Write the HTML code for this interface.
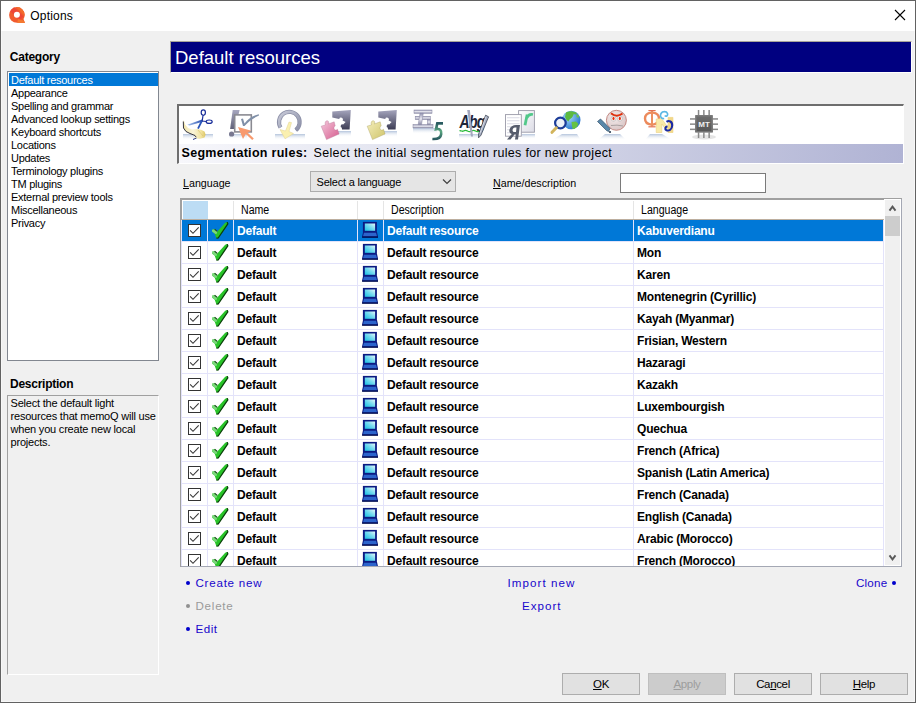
<!DOCTYPE html>
<html><head><meta charset="utf-8"><style>
*{margin:0;padding:0;box-sizing:border-box}
html,body{width:916px;height:703px;overflow:hidden;background:#f0f0f0;font-family:"Liberation Sans",sans-serif;color:#000}
.a{position:absolute}
.t{position:absolute;white-space:pre;line-height:1}
.cat{position:absolute;left:1px;height:13px;width:148px;font-size:11px;letter-spacing:-0.27px;line-height:14px;padding-left:2px;white-space:pre}
.sel{background:#0078d7;color:#fff}
.btn{position:absolute;top:673px;width:78px;height:22px;background:#e1e1e1;border:1px solid #adadad;font-size:11.5px;letter-spacing:-0.35px;text-align:center;line-height:20px;white-space:pre}
.lk{position:absolute;font-size:11.6px;letter-spacing:0.5px;color:#1806cc;white-space:pre;line-height:1}
.dot{position:absolute;width:4.6px;height:4.6px;border-radius:50%;background:#0000cc}
.row{position:absolute;left:0;width:702px;height:22px;border-bottom:1px solid #e3e3fa}
.vl{position:absolute;top:0;width:1px;height:100%;background:#e3e3fa}
.cb{position:absolute;left:7px;top:4px;width:13px;height:13px;border:1px solid #333;background:#fff}
.gt{position:absolute;top:0.5px;line-height:21px;font-size:12px;letter-spacing:-0.2px;font-weight:bold;white-space:pre}
</style></head><body>
<svg width="0" height="0" style="position:absolute"><defs><linearGradient id="scr" x1="0" y1="1" x2="1" y2="0"><stop offset="0" stop-color="#18c0e4"/><stop offset="0.55" stop-color="#7adcf0"/><stop offset="1" stop-color="#e4f8fa"/></linearGradient></defs></svg>
<div class="a" style="left:0;top:0;width:916px;height:703px;border:1px solid #626262"></div>
<div class="a" style="left:1px;top:1px;width:914px;height:701px;border:1px solid #f7f7f7;border-top:0"></div>
<div class="a" style="left:1px;top:1px;width:914px;height:30px;background:#fff"></div>
<svg class="a" style="left:6px;top:4px" width="22" height="22" viewBox="6 4 22 22">
<defs><clipPath id="qc"><circle cx="16.9" cy="14.9" r="7.8"/><path d="M16.9 22.7L24.9 22.9L23.4 18.6L20 18Z"/></clipPath></defs>
<g clip-path="url(#qc)">
<rect x="6" y="4" width="22" height="22" fill="#f15a2e"/>
<path d="M14 5L28 19V5Z" fill="#f36c2c"/>
<path d="M9 10L13 6L23.5 16.5L19.5 20.5Z" fill="#ee4636"/>
<path d="M8 17L12 21L14 26H6Z" fill="#f36a2a"/>
<path d="M18 19L25 21L26 24H17Z" fill="#f47a30"/>
</g>
<circle cx="16.9" cy="14.8" r="3" fill="#fff"/></svg>
<div class="t" style="left:30.3px;top:9.5px;font-size:12px;letter-spacing:0.2px">Options</div>
<svg class="a" style="left:894px;top:9px" width="12" height="12" viewBox="0 0 12 12"><path d="M1 1L11 11M11 1L1 11" stroke="#000" stroke-width="1.1"/></svg>
<div class="t" style="left:9.8px;top:51px;font-size:12px;font-weight:bold;letter-spacing:-0.25px">Category</div>
<div class="a" style="left:7px;top:71px;width:152px;height:290px;background:#fff;border:1px solid #828790"></div>
<div class="cat sel" style="left:9px;top:73px;width:149px">Default resources</div>
<div class="cat" style="left:9px;top:86px;width:149px">Appearance</div>
<div class="cat" style="left:9px;top:99px;width:149px">Spelling and grammar</div>
<div class="cat" style="left:9px;top:112px;width:149px">Advanced lookup settings</div>
<div class="cat" style="left:9px;top:125px;width:149px">Keyboard shortcuts</div>
<div class="cat" style="left:9px;top:138px;width:149px">Locations</div>
<div class="cat" style="left:9px;top:151px;width:149px">Updates</div>
<div class="cat" style="left:9px;top:164px;width:149px">Terminology plugins</div>
<div class="cat" style="left:9px;top:177px;width:149px">TM plugins</div>
<div class="cat" style="left:9px;top:190px;width:149px">External preview tools</div>
<div class="cat" style="left:9px;top:203px;width:149px">Miscellaneous</div>
<div class="cat" style="left:9px;top:216px;width:149px">Privacy</div>
<div class="t" style="left:10px;top:378.3px;font-size:12px;font-weight:bold;letter-spacing:-0.25px">Description</div>
<div class="a" style="left:7px;top:395px;width:152px;height:280px;border-top:1px solid #a0a0a0;border-left:1px solid #a0a0a0;border-right:1px solid #fff;border-bottom:1px solid #fff"></div>
<div class="a" style="left:10.5px;top:397px;font-size:11px;letter-spacing:-0.2px;line-height:13px;white-space:pre">Select the default light
resources that memoQ will use
when you create new local
projects.</div>
<div class="a" style="left:170px;top:41px;width:742px;height:32px;background:#000080;border-top:1px solid #a8a49a;border-left:1px solid #a8a49a;border-right:1px solid #fff;border-bottom:1px solid #fff"></div>
<div class="t" style="left:175px;top:48.5px;font-size:18.5px;color:#fff">Default resources</div>
<div class="a" style="left:177px;top:104px;width:727px;height:60px;background:#fff;border-top:2px solid #6e6e6e;border-left:2px solid #6e6e6e;border-right:1px solid #fff;border-bottom:1px solid #fff"></div>
<div class="a" style="left:179px;top:144px;width:724px;height:19px;background:linear-gradient(to right,#f7f7fb,#dcdeec 40%,#b0b3d4)"></div>
<div class="t" style="left:181.5px;top:146.9px;font-size:12.5px;font-weight:bold;letter-spacing:0.3px">Segmentation rules:</div>
<div class="t" style="left:313.5px;top:146.9px;font-size:12.5px;letter-spacing:0.31px">Select the initial segmentation rules for new project</div>
<svg class="a" style="left:179px;top:106px" width="724" height="38" viewBox="179 106 724 38">
<defs>
<linearGradient id="rf" x1="0" y1="0" x2="0" y2="1"><stop offset="0" stop-color="#b4c4dc"/><stop offset="1" stop-color="#ffffff" stop-opacity="0"/></linearGradient>
<linearGradient id="rib" x1="0" y1="0" x2="1" y2="0"><stop offset="0" stop-color="#f0e4a8"/><stop offset="0.45" stop-color="#faf4d8"/><stop offset="0.8" stop-color="#f2e4a0"/><stop offset="1" stop-color="#dcc460"/></linearGradient>
<linearGradient id="blade" x1="0" y1="0" x2="1" y2="0"><stop offset="0" stop-color="#a8c4ec"/><stop offset="1" stop-color="#2850b0"/></linearGradient>
<linearGradient id="gbar" x1="0" y1="0" x2="0" y2="1"><stop offset="0" stop-color="#a8a8c0"/><stop offset="1" stop-color="#606078"/></linearGradient>
<linearGradient id="ring" x1="0" y1="0" x2="1" y2="1"><stop offset="0" stop-color="#c8cad8"/><stop offset="1" stop-color="#8c90a8"/></linearGradient>
<linearGradient id="dk" x1="0" y1="0" x2="0" y2="1"><stop offset="0" stop-color="#a4a4bc"/><stop offset="1" stop-color="#3c3c54"/></linearGradient>
<linearGradient id="pk" x1="0" y1="0" x2="1" y2="1"><stop offset="0" stop-color="#f4c8dc"/><stop offset="1" stop-color="#d65c8e"/></linearGradient>
<linearGradient id="yl" x1="0" y1="0" x2="1" y2="1"><stop offset="0" stop-color="#f4eebc"/><stop offset="1" stop-color="#cfc46a"/></linearGradient>
<linearGradient id="slv" x1="0" y1="0" x2="0" y2="1"><stop offset="0" stop-color="#9898b4"/><stop offset="0.5" stop-color="#e8e8f0"/><stop offset="1" stop-color="#8a8aa6"/></linearGradient>
<linearGradient id="five" x1="0" y1="0" x2="0" y2="1"><stop offset="0" stop-color="#2a5a60"/><stop offset="0.5" stop-color="#5aa880"/><stop offset="1" stop-color="#2a5a60"/></linearGradient>
<linearGradient id="page" x1="0" y1="0" x2="1" y2="1"><stop offset="0" stop-color="#ffffff"/><stop offset="1" stop-color="#dcdce6"/></linearGradient>
<radialGradient id="globe" cx="0.35" cy="0.35" r="0.7"><stop offset="0" stop-color="#a8dcf8"/><stop offset="1" stop-color="#2a78d0"/></radialGradient>
<radialGradient id="face" cx="0.4" cy="0.35" r="0.7"><stop offset="0" stop-color="#f4ecec"/><stop offset="1" stop-color="#d8c4c4"/></radialGradient>
<linearGradient id="chip" x1="0" y1="0" x2="0" y2="1"><stop offset="0" stop-color="#6e6e6e"/><stop offset="1" stop-color="#555"/></linearGradient>
</defs>

<!-- 1 scissors + ribbon -->
<rect x="183" y="134" width="30" height="6" fill="url(#rf)"/>
<path d="M183.8 120L185 124.5L188 128L192 129.5L197 129L201 129.8L204.5 131.5L205.6 134.5L204.5 137.5L200 138.8L196 138.6L193 139.5L195 136.5L190 133.5L186 131.5L183.5 128L183 123Z" fill="url(#rib)"/>
<path d="M183.3 121.5L183.5 128L186 131.5L190 133.5L195 135.5L196 137" stroke="#202030" stroke-width="0.9" fill="none"/>
<path d="M193 139.5L196.5 138" stroke="#2a3a90" stroke-width="1" fill="none"/>
<path d="M198 130L203 136" stroke="#d8c070" stroke-width="0.6"/>
<path d="M187.3 124.8L202 119.4L202.6 121.8L189.5 125.4Z" fill="url(#blade)"/>
<path d="M202 120.6L198 128.6" stroke="#2a54b8" stroke-width="1.8"/>
<path d="M202.2 120.8L203 115.5" stroke="#1a2f9a" stroke-width="1.2"/>
<ellipse cx="203.3" cy="112.6" rx="2.1" ry="2.7" fill="none" stroke="#1a2f9a" stroke-width="1.2"/>
<path d="M202 121L206 121.5" stroke="#1a2f9a" stroke-width="1.2"/>
<ellipse cx="209.2" cy="121.7" rx="3" ry="1.7" fill="none" stroke="#1a2f9a" stroke-width="1.2"/>

<!-- 2 check + cursor -->
<rect x="229" y="134" width="18" height="5" fill="url(#rf)"/>
<path d="M232.7 110H239.6L235 129H230.1Z" fill="url(#gbar)"/>
<circle cx="231.6" cy="134" r="2.6" fill="#787890"/>
<rect x="234.7" y="114.9" width="16.6" height="17" fill="#fff" stroke="#8a8a92" stroke-width="1.6"/>
<path d="M241 119L243 118.5L244.5 123.5C248 119 252 116 258.8 114.2L259 115.5C253 118 248.5 121.5 244.5 126L243 126Z" fill="#8090a8"/>
<path d="M238 127L251.5 130.8L247.5 132.5L253.8 138.6L252.2 140L245.8 134L243 139Z" fill="#f89a6e"/>

<!-- 3 ring + arrow -->
<rect x="275" y="134" width="30" height="6" fill="url(#rf)"/>
<path d="M280.5 127.5A10.3 10.3 0 1 1 295.8 130.2" fill="none" stroke="#8a8ea6" stroke-width="4.2"/>
<path d="M280.5 127.5A10.3 10.3 0 1 1 295.8 130.2" fill="none" stroke="url(#ring)" stroke-width="2.6"/>
<path d="M289 122L291.5 122.6L289 131.5L293.5 133.5L285 138.8L280 129.5L285.5 131Z" fill="#faf0b0" stroke="#e0d090" stroke-width="0.5"/>

<!-- 4 puzzle pink -->
<rect x="338" y="131" width="13" height="6" fill="url(#rf)"/>
<path d="M332.3 111.4L350.8 110.1L349.6 129.6H342L341.8 127.8A1.8 1.8 0 1 1 343.2 124.4L345.6 122L342.6 120.6A1.9 1.9 0 1 0 339.2 119L332.3 117.4Z" fill="url(#dk)"/>
<path d="M321.2 126.2L325.5 124.8C324.5 123 325.5 120.5 327.3 120.7C329 121 329 123 328.3 124L334.2 121.8L335.2 126C333.8 126.5 333.6 128.5 334.5 129.5C335.5 130.5 337 130 337.5 129.3L339.1 134L326.5 139.6Z" fill="url(#pk)" stroke="#b87898" stroke-width="0.4"/>

<!-- 5 puzzle yellow -->
<rect x="384" y="131" width="13" height="6" fill="url(#rf)"/>
<path d="M378.3 111.4L396.8 110.1L395.6 129.6H388L387.8 127.8A1.8 1.8 0 1 1 389.2 124.4L391.6 122L388.6 120.6A1.9 1.9 0 1 0 385.2 119L378.3 117.4Z" fill="url(#dk)"/>
<path d="M367.2 126.2L371.5 124.8C370.5 123 371.5 120.5 373.3 120.7C375 121 375 123 374.3 124L380.2 121.8L381.2 126C379.8 126.5 379.6 128.5 380.5 129.5C381.5 130.5 383 130 383.5 129.3L385.1 134L372.5 139.6Z" fill="url(#yl)" stroke="#a8a060" stroke-width="0.4"/>

<!-- 6 五 5 -->
<rect x="413" y="128" width="24" height="6" fill="url(#rf)"/>
<g fill="url(#slv)" stroke="#8484a0" stroke-width="0.5">
<rect x="414" y="110" width="18" height="3.3"/>
<rect x="415.2" y="116.3" width="15.3" height="3.2"/>
<rect x="413" y="124.6" width="20" height="3.3"/>
<path d="M420 113.3H423.3L421.5 124.6H418.2Z"/>
<rect x="427.3" y="119.5" width="3" height="5.1"/>
</g>
<path d="M443 123.4H437.3L436 129.2C439.8 128.2 441.6 130.6 441.2 134C440.8 137.6 437.2 139.3 432.4 139" stroke="url(#five)" stroke-width="2.6" fill="none"/>

<!-- 7 Abg + pencil -->
<rect x="459" y="134" width="20" height="5" fill="url(#rf)"/>
<text transform="translate(459.6 127.8) scale(0.8 1)" font-family="Liberation Sans" font-weight="bold" font-style="italic" font-size="17.5" fill="#1e2638" letter-spacing="-0.9">Abg</text>
<path d="M459.5 131C461 130 462 132 463.5 131S466 130 467.5 131S470 132 471.5 131S474 130 475.5 131S478 132 479 131" stroke="#2cbc3c" stroke-width="1.3" fill="none"/>
<path d="M467.2 110H469.8L473 136.5H471Z" fill="#a4a8be"/>
<path d="M485.6 115.2L488.6 116.8L481 135.2L478.6 137.8L478.6 134Z" fill="#a8b0c4" stroke="#283040" stroke-width="0.7"/>
<path d="M486 116.5L480 133" stroke="#e8ecf4" stroke-width="0.7"/>

<!-- 8 documents -->
<rect x="522" y="134" width="13" height="5" fill="url(#rf)"/>
<rect x="518.6" y="110.6" width="15.8" height="21.6" fill="url(#page)" stroke="#9a9aa8" stroke-width="0.9"/>
<path d="M525 125.2L527.2 114.6" stroke="#52c88a" stroke-width="2.8"/><path d="M526.8 118C528 115.2 530.4 114 533 114.6" stroke="#52c88a" stroke-width="2.6" fill="none"/>
<rect x="505.5" y="114.6" width="15.8" height="21.6" fill="#fff" stroke="#9a9aa8" stroke-width="0.9"/>
<g fill="#e2e2ea"><rect x="507" y="117" width="12.5" height="1.3"/><rect x="507" y="120" width="12.5" height="1.3"/><rect x="507" y="123" width="12.5" height="1.3"/><rect x="507" y="126" width="5" height="1.3"/><rect x="507" y="129" width="4" height="1.3"/><rect x="507" y="132" width="3" height="1.3"/></g>
<path d="M520 125L518 139.5H515L515.8 134.5H514.5L510.5 139.5H507L511.8 134C509.5 133.5 509 131.5 509.5 129.5C510.2 126.5 513 125 516 125ZM516.5 127.5H515C513.5 127.5 512.8 128.5 512.6 129.8C512.4 131 513 132 514.5 132H516Z" fill="#565c6c"/>

<!-- 9 globe + magnifier -->
<path d="M562 134H577L581 140H552Z" fill="url(#rf)"/>
<circle cx="571.2" cy="120" r="9.3" fill="url(#globe)"/>
<path d="M566 113C568 111.5 572 111 574 112.5L573 116L570 118.5L568 117.5L566.5 118Z" fill="#6cc444"/>
<path d="M572.5 122.5L575.5 122L577 124.5L575 128.5L572.5 129Z" fill="#6cc444"/>
<path d="M576.5 114L579 115.5L578.5 118L576.5 117Z" fill="#6cc444"/><path d="M566 112.5C569 111 574 111 577 113L576 114.5L573.5 114L572 117.5L569.5 119.5L568.5 121.5L566.5 120L565 117Z" fill="#5cba40"/><path d="M571.5 122L576 121.5L578.5 124L576.5 127.5L573.5 129L572 126Z" fill="#66c244"/>
<circle cx="560.4" cy="123" r="5.3" fill="#eef2f8" stroke="#1c3c98" stroke-width="2.2"/>
<path d="M556.3 127.8L552 132.3" stroke="#d2b45c" stroke-width="3" stroke-linecap="round"/>

<!-- 10 angry face + pen -->
<path d="M605 134H620L626 140H598Z" fill="url(#rf)"/>
<circle cx="616.4" cy="120.3" r="10" fill="url(#face)" stroke="#b87068" stroke-width="0.8"/>
<path d="M611 113.2Q616.5 118 622.5 113.5" stroke="#e0300c" stroke-width="2" fill="none"/>
<ellipse cx="613.5" cy="118.6" rx="2.4" ry="2.6" fill="#fff" stroke="#a0a0a0" stroke-width="0.5"/>
<ellipse cx="619.8" cy="118.6" rx="2.4" ry="2.6" fill="#fff" stroke="#a0a0a0" stroke-width="0.5"/>
<ellipse cx="613.5" cy="118.5" rx="1.1" ry="1.8" fill="#e83010"/>
<ellipse cx="619.8" cy="118.5" rx="1.1" ry="1.8" fill="#e83010"/>
<path d="M611 125.5Q617 124.5 623 126" stroke="#a8a0a0" stroke-width="1" fill="none"/>
<path d="M597.5 121.5L600.5 119L610 128.5L608.5 131.5L606.5 130.5Z" fill="#5a88aa" stroke="#34506a" stroke-width="0.7"/>
<circle cx="610" cy="132" r="1.1" fill="#2a3c50"/>

<!-- 11 Phi + N -->
<path d="M650 134H662L672 140H645Z" fill="url(#rf)"/>
<path d="M651.2 112.6C647 113 645 115.5 645 118.6C645 121.8 647 124.2 651.2 124.6M652.8 112.6C657 113 659 115.5 659 118.6C659 121.8 657 124.2 652.8 124.6" fill="none" stroke="#ec8a5c" stroke-width="2.4"/>
<rect x="651" y="110.8" width="2" height="15.6" fill="#ec9060"/>
<rect x="648.4" y="110" width="7.2" height="1.2" fill="#e07050"/>
<rect x="648.4" y="126.2" width="7.2" height="1.2" fill="#e07050"/>
<path d="M656.2 119L661.6 118.5L668 127.5V117.4H673V132.5H668L661.8 124V132.5H656.2Z" fill="#f8eaa8" stroke="#e8c870" stroke-width="0.5"/>
<rect x="668" y="117.4" width="5" height="15.1" fill="#f2d88a"/>
<path d="M666.5 121.8C669 120 672.4 121.5 672.2 125.5C672 129.5 669 131.2 666.5 130.2C664.5 129.2 665.2 126.5 667.5 126.5" stroke="#1a2aa4" stroke-width="2.1" fill="none"/>
<path d="M664.2 118.5C661 119 659.6 116 661 113.5C662.5 111 666.5 111 667.5 113.5C668.3 115.8 666 117 664.8 115.5" stroke="#5cb8e4" stroke-width="1.7" fill="none"/>

<!-- 12 MT chip -->
<ellipse cx="704" cy="137" rx="12" ry="2.5" fill="#d8d8d8" opacity="0.7"/>
<g fill="#8a8a8a">
<rect x="697.8" y="110" width="1.5" height="5"/><rect x="703.1" y="110" width="1.5" height="5"/><rect x="708.4" y="110" width="1.5" height="5"/>
<rect x="697.8" y="132.5" width="1.5" height="5.5"/><rect x="703.1" y="132.5" width="1.5" height="5.5"/><rect x="708.4" y="132.5" width="1.5" height="5.5"/>
<rect x="690" y="118.2" width="5.2" height="1.5"/><rect x="690" y="123.4" width="5.2" height="1.5"/><rect x="690" y="128.6" width="5.2" height="1.5"/>
<rect x="712.8" y="118.2" width="5.2" height="1.5"/><rect x="712.8" y="123.4" width="5.2" height="1.5"/><rect x="712.8" y="128.6" width="5.2" height="1.5"/>
</g>
<rect x="695.2" y="115.1" width="17.6" height="17.4" fill="url(#chip)"/>
<rect x="696.2" y="116.1" width="15.6" height="15.4" fill="none" stroke="#7a7a7a" stroke-width="0.8"/>
<text x="704" y="127.3" font-family="Liberation Sans" font-weight="bold" font-size="8" fill="#f0f0f0" text-anchor="middle">MT</text>
</svg>

<div class="t" style="left:183px;top:178px;font-size:10.7px"><u>L</u>anguage</div>
<div class="a" style="left:310px;top:171px;width:146px;height:21px;background:#e5e5e5;border:1px solid #adadad"></div>
<div class="t" style="left:316.5px;top:176.5px;font-size:11px;letter-spacing:-0.2px">Select a language</div>
<svg class="a" style="left:442px;top:178px" width="10" height="7" viewBox="0 0 10 7"><path d="M1 1.5L5 5.5L9 1.5" stroke="#404040" stroke-width="1.2" fill="none"/></svg>
<div class="t" style="left:493px;top:178px;font-size:10.7px"><u>N</u>ame/description</div>
<div class="a" style="left:620px;top:173px;width:146px;height:20px;background:#fff;border:1px solid #7a7a7a"></div>
<div class="a" style="left:180px;top:198px;width:722px;height:369px;background:#fff;border-top:2px solid #a0a0a0;border-left:2px solid #a0a0a0;border-right:1px solid #a4a8b4;border-bottom:1px solid #a4a8b4"></div>
<div class="a" style="left:182px;top:200px;width:702px;height:20px;background:#fff;border-bottom:1px solid #bcae9e"></div>
<div class="a" style="left:183px;top:201px;width:25px;height:18px;background:#bcdcf4"></div>
<div class="a" style="left:233px;top:201px;width:1px;height:18px;background:#e5e5e5"></div>
<div class="a" style="left:357px;top:201px;width:1px;height:18px;background:#e5e5e5"></div>
<div class="a" style="left:383px;top:201px;width:1px;height:18px;background:#e5e5e5"></div>
<div class="a" style="left:633px;top:201px;width:1px;height:18px;background:#e5e5e5"></div>
<div class="t" style="left:240.5px;top:203.5px;font-size:12.3px;transform:scaleX(0.86);transform-origin:0 0">Name</div>
<div class="t" style="left:390.5px;top:203.5px;font-size:12.3px;transform:scaleX(0.86);transform-origin:0 0">Description</div>
<div class="t" style="left:640.5px;top:203.5px;font-size:12.3px;transform:scaleX(0.86);transform-origin:0 0">Language</div>
<div class="a" style="left:181px;top:220px;width:703px;height:346px;overflow:hidden">
<div class="row" style="top:0px;background:#0078d7;color:#fff;">
<div class="cb"></div>
<svg class="a" style="left:7px;top:6px" width="12" height="9" viewBox="0 0 12 9"><path d="M2.1 4.4L5 7.3L10.7 1.3" stroke="#383838" stroke-width="1.1" fill="none"/></svg>
<svg class="a" style="left:28px;top:0" width="22" height="22" viewBox="0 0 22 22"><path d="M16.2 2.8L18.2 2.1L18.8 3.9L9.2 18L7.4 18.2L5.6 13.6L3 11.6V9.8L5.6 9.2L8.3 11.4Z" fill="#28c428"/><path d="M3 11.6V9.8L5.6 9.2L8.3 11.4L7.5 14.2L5.6 13.6Z" fill="#7ad87a"/><path d="M5.6 9.2L8.3 11.4" stroke="#1a4a1a" stroke-width="1.1"/><path d="M18.2 2.1L18.8 3.9L9.2 18L7.4 18.2" stroke="#0a420a" stroke-width="1.3" fill="none"/></svg>
<svg class="a" style="left:180px;top:0" width="20" height="22" viewBox="0 0 20 22"><rect x="1.9" y="1.9" width="14" height="10.1" fill="#0b1a82"/><rect x="3.8" y="3.5" width="10.3" height="7.3" fill="url(#scr)"/><path d="M2 12H16L17 16.5V17.6H1.1V16.5Z" fill="#0b1a82"/><path d="M3 12.8H15L16 16.3H2Z" fill="#2c64cc"/><rect x="1.1" y="16.6" width="15.9" height="1.1" fill="#000a48"/></svg>
<div class="gt" style="left:56px">Default</div>
<div class="gt" style="left:206px">Default resource</div>
<div class="gt" style="left:456px">Kabuverdianu</div>
</div>
<div class="row" style="top:22px;">
<div class="cb"></div>
<svg class="a" style="left:7px;top:6px" width="12" height="9" viewBox="0 0 12 9"><path d="M2.1 4.4L5 7.3L10.7 1.3" stroke="#383838" stroke-width="1.1" fill="none"/></svg>
<svg class="a" style="left:28px;top:0" width="22" height="22" viewBox="0 0 22 22"><path d="M16.2 2.8L18.2 2.1L18.8 3.9L9.2 18L7.4 18.2L5.6 13.6L3 11.6V9.8L5.6 9.2L8.3 11.4Z" fill="#28c428"/><path d="M3 11.6V9.8L5.6 9.2L8.3 11.4L7.5 14.2L5.6 13.6Z" fill="#7ad87a"/><path d="M5.6 9.2L8.3 11.4" stroke="#1a4a1a" stroke-width="1.1"/><path d="M18.2 2.1L18.8 3.9L9.2 18L7.4 18.2" stroke="#0a420a" stroke-width="1.3" fill="none"/></svg>
<svg class="a" style="left:180px;top:0" width="20" height="22" viewBox="0 0 20 22"><rect x="1.9" y="1.9" width="14" height="10.1" fill="#0b1a82"/><rect x="3.8" y="3.5" width="10.3" height="7.3" fill="url(#scr)"/><path d="M2 12H16L17 16.5V17.6H1.1V16.5Z" fill="#0b1a82"/><path d="M3 12.8H15L16 16.3H2Z" fill="#2c64cc"/><rect x="1.1" y="16.6" width="15.9" height="1.1" fill="#000a48"/></svg>
<div class="gt" style="left:56px">Default</div>
<div class="gt" style="left:206px">Default resource</div>
<div class="gt" style="left:456px">Mon</div>
</div>
<div class="row" style="top:44px;">
<div class="cb"></div>
<svg class="a" style="left:7px;top:6px" width="12" height="9" viewBox="0 0 12 9"><path d="M2.1 4.4L5 7.3L10.7 1.3" stroke="#383838" stroke-width="1.1" fill="none"/></svg>
<svg class="a" style="left:28px;top:0" width="22" height="22" viewBox="0 0 22 22"><path d="M16.2 2.8L18.2 2.1L18.8 3.9L9.2 18L7.4 18.2L5.6 13.6L3 11.6V9.8L5.6 9.2L8.3 11.4Z" fill="#28c428"/><path d="M3 11.6V9.8L5.6 9.2L8.3 11.4L7.5 14.2L5.6 13.6Z" fill="#7ad87a"/><path d="M5.6 9.2L8.3 11.4" stroke="#1a4a1a" stroke-width="1.1"/><path d="M18.2 2.1L18.8 3.9L9.2 18L7.4 18.2" stroke="#0a420a" stroke-width="1.3" fill="none"/></svg>
<svg class="a" style="left:180px;top:0" width="20" height="22" viewBox="0 0 20 22"><rect x="1.9" y="1.9" width="14" height="10.1" fill="#0b1a82"/><rect x="3.8" y="3.5" width="10.3" height="7.3" fill="url(#scr)"/><path d="M2 12H16L17 16.5V17.6H1.1V16.5Z" fill="#0b1a82"/><path d="M3 12.8H15L16 16.3H2Z" fill="#2c64cc"/><rect x="1.1" y="16.6" width="15.9" height="1.1" fill="#000a48"/></svg>
<div class="gt" style="left:56px">Default</div>
<div class="gt" style="left:206px">Default resource</div>
<div class="gt" style="left:456px">Karen</div>
</div>
<div class="row" style="top:66px;">
<div class="cb"></div>
<svg class="a" style="left:7px;top:6px" width="12" height="9" viewBox="0 0 12 9"><path d="M2.1 4.4L5 7.3L10.7 1.3" stroke="#383838" stroke-width="1.1" fill="none"/></svg>
<svg class="a" style="left:28px;top:0" width="22" height="22" viewBox="0 0 22 22"><path d="M16.2 2.8L18.2 2.1L18.8 3.9L9.2 18L7.4 18.2L5.6 13.6L3 11.6V9.8L5.6 9.2L8.3 11.4Z" fill="#28c428"/><path d="M3 11.6V9.8L5.6 9.2L8.3 11.4L7.5 14.2L5.6 13.6Z" fill="#7ad87a"/><path d="M5.6 9.2L8.3 11.4" stroke="#1a4a1a" stroke-width="1.1"/><path d="M18.2 2.1L18.8 3.9L9.2 18L7.4 18.2" stroke="#0a420a" stroke-width="1.3" fill="none"/></svg>
<svg class="a" style="left:180px;top:0" width="20" height="22" viewBox="0 0 20 22"><rect x="1.9" y="1.9" width="14" height="10.1" fill="#0b1a82"/><rect x="3.8" y="3.5" width="10.3" height="7.3" fill="url(#scr)"/><path d="M2 12H16L17 16.5V17.6H1.1V16.5Z" fill="#0b1a82"/><path d="M3 12.8H15L16 16.3H2Z" fill="#2c64cc"/><rect x="1.1" y="16.6" width="15.9" height="1.1" fill="#000a48"/></svg>
<div class="gt" style="left:56px">Default</div>
<div class="gt" style="left:206px">Default resource</div>
<div class="gt" style="left:456px">Montenegrin (Cyrillic)</div>
</div>
<div class="row" style="top:88px;">
<div class="cb"></div>
<svg class="a" style="left:7px;top:6px" width="12" height="9" viewBox="0 0 12 9"><path d="M2.1 4.4L5 7.3L10.7 1.3" stroke="#383838" stroke-width="1.1" fill="none"/></svg>
<svg class="a" style="left:28px;top:0" width="22" height="22" viewBox="0 0 22 22"><path d="M16.2 2.8L18.2 2.1L18.8 3.9L9.2 18L7.4 18.2L5.6 13.6L3 11.6V9.8L5.6 9.2L8.3 11.4Z" fill="#28c428"/><path d="M3 11.6V9.8L5.6 9.2L8.3 11.4L7.5 14.2L5.6 13.6Z" fill="#7ad87a"/><path d="M5.6 9.2L8.3 11.4" stroke="#1a4a1a" stroke-width="1.1"/><path d="M18.2 2.1L18.8 3.9L9.2 18L7.4 18.2" stroke="#0a420a" stroke-width="1.3" fill="none"/></svg>
<svg class="a" style="left:180px;top:0" width="20" height="22" viewBox="0 0 20 22"><rect x="1.9" y="1.9" width="14" height="10.1" fill="#0b1a82"/><rect x="3.8" y="3.5" width="10.3" height="7.3" fill="url(#scr)"/><path d="M2 12H16L17 16.5V17.6H1.1V16.5Z" fill="#0b1a82"/><path d="M3 12.8H15L16 16.3H2Z" fill="#2c64cc"/><rect x="1.1" y="16.6" width="15.9" height="1.1" fill="#000a48"/></svg>
<div class="gt" style="left:56px">Default</div>
<div class="gt" style="left:206px">Default resource</div>
<div class="gt" style="left:456px">Kayah (Myanmar)</div>
</div>
<div class="row" style="top:110px;">
<div class="cb"></div>
<svg class="a" style="left:7px;top:6px" width="12" height="9" viewBox="0 0 12 9"><path d="M2.1 4.4L5 7.3L10.7 1.3" stroke="#383838" stroke-width="1.1" fill="none"/></svg>
<svg class="a" style="left:28px;top:0" width="22" height="22" viewBox="0 0 22 22"><path d="M16.2 2.8L18.2 2.1L18.8 3.9L9.2 18L7.4 18.2L5.6 13.6L3 11.6V9.8L5.6 9.2L8.3 11.4Z" fill="#28c428"/><path d="M3 11.6V9.8L5.6 9.2L8.3 11.4L7.5 14.2L5.6 13.6Z" fill="#7ad87a"/><path d="M5.6 9.2L8.3 11.4" stroke="#1a4a1a" stroke-width="1.1"/><path d="M18.2 2.1L18.8 3.9L9.2 18L7.4 18.2" stroke="#0a420a" stroke-width="1.3" fill="none"/></svg>
<svg class="a" style="left:180px;top:0" width="20" height="22" viewBox="0 0 20 22"><rect x="1.9" y="1.9" width="14" height="10.1" fill="#0b1a82"/><rect x="3.8" y="3.5" width="10.3" height="7.3" fill="url(#scr)"/><path d="M2 12H16L17 16.5V17.6H1.1V16.5Z" fill="#0b1a82"/><path d="M3 12.8H15L16 16.3H2Z" fill="#2c64cc"/><rect x="1.1" y="16.6" width="15.9" height="1.1" fill="#000a48"/></svg>
<div class="gt" style="left:56px">Default</div>
<div class="gt" style="left:206px">Default resource</div>
<div class="gt" style="left:456px">Frisian, Western</div>
</div>
<div class="row" style="top:132px;">
<div class="cb"></div>
<svg class="a" style="left:7px;top:6px" width="12" height="9" viewBox="0 0 12 9"><path d="M2.1 4.4L5 7.3L10.7 1.3" stroke="#383838" stroke-width="1.1" fill="none"/></svg>
<svg class="a" style="left:28px;top:0" width="22" height="22" viewBox="0 0 22 22"><path d="M16.2 2.8L18.2 2.1L18.8 3.9L9.2 18L7.4 18.2L5.6 13.6L3 11.6V9.8L5.6 9.2L8.3 11.4Z" fill="#28c428"/><path d="M3 11.6V9.8L5.6 9.2L8.3 11.4L7.5 14.2L5.6 13.6Z" fill="#7ad87a"/><path d="M5.6 9.2L8.3 11.4" stroke="#1a4a1a" stroke-width="1.1"/><path d="M18.2 2.1L18.8 3.9L9.2 18L7.4 18.2" stroke="#0a420a" stroke-width="1.3" fill="none"/></svg>
<svg class="a" style="left:180px;top:0" width="20" height="22" viewBox="0 0 20 22"><rect x="1.9" y="1.9" width="14" height="10.1" fill="#0b1a82"/><rect x="3.8" y="3.5" width="10.3" height="7.3" fill="url(#scr)"/><path d="M2 12H16L17 16.5V17.6H1.1V16.5Z" fill="#0b1a82"/><path d="M3 12.8H15L16 16.3H2Z" fill="#2c64cc"/><rect x="1.1" y="16.6" width="15.9" height="1.1" fill="#000a48"/></svg>
<div class="gt" style="left:56px">Default</div>
<div class="gt" style="left:206px">Default resource</div>
<div class="gt" style="left:456px">Hazaragi</div>
</div>
<div class="row" style="top:154px;">
<div class="cb"></div>
<svg class="a" style="left:7px;top:6px" width="12" height="9" viewBox="0 0 12 9"><path d="M2.1 4.4L5 7.3L10.7 1.3" stroke="#383838" stroke-width="1.1" fill="none"/></svg>
<svg class="a" style="left:28px;top:0" width="22" height="22" viewBox="0 0 22 22"><path d="M16.2 2.8L18.2 2.1L18.8 3.9L9.2 18L7.4 18.2L5.6 13.6L3 11.6V9.8L5.6 9.2L8.3 11.4Z" fill="#28c428"/><path d="M3 11.6V9.8L5.6 9.2L8.3 11.4L7.5 14.2L5.6 13.6Z" fill="#7ad87a"/><path d="M5.6 9.2L8.3 11.4" stroke="#1a4a1a" stroke-width="1.1"/><path d="M18.2 2.1L18.8 3.9L9.2 18L7.4 18.2" stroke="#0a420a" stroke-width="1.3" fill="none"/></svg>
<svg class="a" style="left:180px;top:0" width="20" height="22" viewBox="0 0 20 22"><rect x="1.9" y="1.9" width="14" height="10.1" fill="#0b1a82"/><rect x="3.8" y="3.5" width="10.3" height="7.3" fill="url(#scr)"/><path d="M2 12H16L17 16.5V17.6H1.1V16.5Z" fill="#0b1a82"/><path d="M3 12.8H15L16 16.3H2Z" fill="#2c64cc"/><rect x="1.1" y="16.6" width="15.9" height="1.1" fill="#000a48"/></svg>
<div class="gt" style="left:56px">Default</div>
<div class="gt" style="left:206px">Default resource</div>
<div class="gt" style="left:456px">Kazakh</div>
</div>
<div class="row" style="top:176px;">
<div class="cb"></div>
<svg class="a" style="left:7px;top:6px" width="12" height="9" viewBox="0 0 12 9"><path d="M2.1 4.4L5 7.3L10.7 1.3" stroke="#383838" stroke-width="1.1" fill="none"/></svg>
<svg class="a" style="left:28px;top:0" width="22" height="22" viewBox="0 0 22 22"><path d="M16.2 2.8L18.2 2.1L18.8 3.9L9.2 18L7.4 18.2L5.6 13.6L3 11.6V9.8L5.6 9.2L8.3 11.4Z" fill="#28c428"/><path d="M3 11.6V9.8L5.6 9.2L8.3 11.4L7.5 14.2L5.6 13.6Z" fill="#7ad87a"/><path d="M5.6 9.2L8.3 11.4" stroke="#1a4a1a" stroke-width="1.1"/><path d="M18.2 2.1L18.8 3.9L9.2 18L7.4 18.2" stroke="#0a420a" stroke-width="1.3" fill="none"/></svg>
<svg class="a" style="left:180px;top:0" width="20" height="22" viewBox="0 0 20 22"><rect x="1.9" y="1.9" width="14" height="10.1" fill="#0b1a82"/><rect x="3.8" y="3.5" width="10.3" height="7.3" fill="url(#scr)"/><path d="M2 12H16L17 16.5V17.6H1.1V16.5Z" fill="#0b1a82"/><path d="M3 12.8H15L16 16.3H2Z" fill="#2c64cc"/><rect x="1.1" y="16.6" width="15.9" height="1.1" fill="#000a48"/></svg>
<div class="gt" style="left:56px">Default</div>
<div class="gt" style="left:206px">Default resource</div>
<div class="gt" style="left:456px">Luxembourgish</div>
</div>
<div class="row" style="top:198px;">
<div class="cb"></div>
<svg class="a" style="left:7px;top:6px" width="12" height="9" viewBox="0 0 12 9"><path d="M2.1 4.4L5 7.3L10.7 1.3" stroke="#383838" stroke-width="1.1" fill="none"/></svg>
<svg class="a" style="left:28px;top:0" width="22" height="22" viewBox="0 0 22 22"><path d="M16.2 2.8L18.2 2.1L18.8 3.9L9.2 18L7.4 18.2L5.6 13.6L3 11.6V9.8L5.6 9.2L8.3 11.4Z" fill="#28c428"/><path d="M3 11.6V9.8L5.6 9.2L8.3 11.4L7.5 14.2L5.6 13.6Z" fill="#7ad87a"/><path d="M5.6 9.2L8.3 11.4" stroke="#1a4a1a" stroke-width="1.1"/><path d="M18.2 2.1L18.8 3.9L9.2 18L7.4 18.2" stroke="#0a420a" stroke-width="1.3" fill="none"/></svg>
<svg class="a" style="left:180px;top:0" width="20" height="22" viewBox="0 0 20 22"><rect x="1.9" y="1.9" width="14" height="10.1" fill="#0b1a82"/><rect x="3.8" y="3.5" width="10.3" height="7.3" fill="url(#scr)"/><path d="M2 12H16L17 16.5V17.6H1.1V16.5Z" fill="#0b1a82"/><path d="M3 12.8H15L16 16.3H2Z" fill="#2c64cc"/><rect x="1.1" y="16.6" width="15.9" height="1.1" fill="#000a48"/></svg>
<div class="gt" style="left:56px">Default</div>
<div class="gt" style="left:206px">Default resource</div>
<div class="gt" style="left:456px">Quechua</div>
</div>
<div class="row" style="top:220px;">
<div class="cb"></div>
<svg class="a" style="left:7px;top:6px" width="12" height="9" viewBox="0 0 12 9"><path d="M2.1 4.4L5 7.3L10.7 1.3" stroke="#383838" stroke-width="1.1" fill="none"/></svg>
<svg class="a" style="left:28px;top:0" width="22" height="22" viewBox="0 0 22 22"><path d="M16.2 2.8L18.2 2.1L18.8 3.9L9.2 18L7.4 18.2L5.6 13.6L3 11.6V9.8L5.6 9.2L8.3 11.4Z" fill="#28c428"/><path d="M3 11.6V9.8L5.6 9.2L8.3 11.4L7.5 14.2L5.6 13.6Z" fill="#7ad87a"/><path d="M5.6 9.2L8.3 11.4" stroke="#1a4a1a" stroke-width="1.1"/><path d="M18.2 2.1L18.8 3.9L9.2 18L7.4 18.2" stroke="#0a420a" stroke-width="1.3" fill="none"/></svg>
<svg class="a" style="left:180px;top:0" width="20" height="22" viewBox="0 0 20 22"><rect x="1.9" y="1.9" width="14" height="10.1" fill="#0b1a82"/><rect x="3.8" y="3.5" width="10.3" height="7.3" fill="url(#scr)"/><path d="M2 12H16L17 16.5V17.6H1.1V16.5Z" fill="#0b1a82"/><path d="M3 12.8H15L16 16.3H2Z" fill="#2c64cc"/><rect x="1.1" y="16.6" width="15.9" height="1.1" fill="#000a48"/></svg>
<div class="gt" style="left:56px">Default</div>
<div class="gt" style="left:206px">Default resource</div>
<div class="gt" style="left:456px">French (Africa)</div>
</div>
<div class="row" style="top:242px;">
<div class="cb"></div>
<svg class="a" style="left:7px;top:6px" width="12" height="9" viewBox="0 0 12 9"><path d="M2.1 4.4L5 7.3L10.7 1.3" stroke="#383838" stroke-width="1.1" fill="none"/></svg>
<svg class="a" style="left:28px;top:0" width="22" height="22" viewBox="0 0 22 22"><path d="M16.2 2.8L18.2 2.1L18.8 3.9L9.2 18L7.4 18.2L5.6 13.6L3 11.6V9.8L5.6 9.2L8.3 11.4Z" fill="#28c428"/><path d="M3 11.6V9.8L5.6 9.2L8.3 11.4L7.5 14.2L5.6 13.6Z" fill="#7ad87a"/><path d="M5.6 9.2L8.3 11.4" stroke="#1a4a1a" stroke-width="1.1"/><path d="M18.2 2.1L18.8 3.9L9.2 18L7.4 18.2" stroke="#0a420a" stroke-width="1.3" fill="none"/></svg>
<svg class="a" style="left:180px;top:0" width="20" height="22" viewBox="0 0 20 22"><rect x="1.9" y="1.9" width="14" height="10.1" fill="#0b1a82"/><rect x="3.8" y="3.5" width="10.3" height="7.3" fill="url(#scr)"/><path d="M2 12H16L17 16.5V17.6H1.1V16.5Z" fill="#0b1a82"/><path d="M3 12.8H15L16 16.3H2Z" fill="#2c64cc"/><rect x="1.1" y="16.6" width="15.9" height="1.1" fill="#000a48"/></svg>
<div class="gt" style="left:56px">Default</div>
<div class="gt" style="left:206px">Default resource</div>
<div class="gt" style="left:456px">Spanish (Latin America)</div>
</div>
<div class="row" style="top:264px;">
<div class="cb"></div>
<svg class="a" style="left:7px;top:6px" width="12" height="9" viewBox="0 0 12 9"><path d="M2.1 4.4L5 7.3L10.7 1.3" stroke="#383838" stroke-width="1.1" fill="none"/></svg>
<svg class="a" style="left:28px;top:0" width="22" height="22" viewBox="0 0 22 22"><path d="M16.2 2.8L18.2 2.1L18.8 3.9L9.2 18L7.4 18.2L5.6 13.6L3 11.6V9.8L5.6 9.2L8.3 11.4Z" fill="#28c428"/><path d="M3 11.6V9.8L5.6 9.2L8.3 11.4L7.5 14.2L5.6 13.6Z" fill="#7ad87a"/><path d="M5.6 9.2L8.3 11.4" stroke="#1a4a1a" stroke-width="1.1"/><path d="M18.2 2.1L18.8 3.9L9.2 18L7.4 18.2" stroke="#0a420a" stroke-width="1.3" fill="none"/></svg>
<svg class="a" style="left:180px;top:0" width="20" height="22" viewBox="0 0 20 22"><rect x="1.9" y="1.9" width="14" height="10.1" fill="#0b1a82"/><rect x="3.8" y="3.5" width="10.3" height="7.3" fill="url(#scr)"/><path d="M2 12H16L17 16.5V17.6H1.1V16.5Z" fill="#0b1a82"/><path d="M3 12.8H15L16 16.3H2Z" fill="#2c64cc"/><rect x="1.1" y="16.6" width="15.9" height="1.1" fill="#000a48"/></svg>
<div class="gt" style="left:56px">Default</div>
<div class="gt" style="left:206px">Default resource</div>
<div class="gt" style="left:456px">French (Canada)</div>
</div>
<div class="row" style="top:286px;">
<div class="cb"></div>
<svg class="a" style="left:7px;top:6px" width="12" height="9" viewBox="0 0 12 9"><path d="M2.1 4.4L5 7.3L10.7 1.3" stroke="#383838" stroke-width="1.1" fill="none"/></svg>
<svg class="a" style="left:28px;top:0" width="22" height="22" viewBox="0 0 22 22"><path d="M16.2 2.8L18.2 2.1L18.8 3.9L9.2 18L7.4 18.2L5.6 13.6L3 11.6V9.8L5.6 9.2L8.3 11.4Z" fill="#28c428"/><path d="M3 11.6V9.8L5.6 9.2L8.3 11.4L7.5 14.2L5.6 13.6Z" fill="#7ad87a"/><path d="M5.6 9.2L8.3 11.4" stroke="#1a4a1a" stroke-width="1.1"/><path d="M18.2 2.1L18.8 3.9L9.2 18L7.4 18.2" stroke="#0a420a" stroke-width="1.3" fill="none"/></svg>
<svg class="a" style="left:180px;top:0" width="20" height="22" viewBox="0 0 20 22"><rect x="1.9" y="1.9" width="14" height="10.1" fill="#0b1a82"/><rect x="3.8" y="3.5" width="10.3" height="7.3" fill="url(#scr)"/><path d="M2 12H16L17 16.5V17.6H1.1V16.5Z" fill="#0b1a82"/><path d="M3 12.8H15L16 16.3H2Z" fill="#2c64cc"/><rect x="1.1" y="16.6" width="15.9" height="1.1" fill="#000a48"/></svg>
<div class="gt" style="left:56px">Default</div>
<div class="gt" style="left:206px">Default resource</div>
<div class="gt" style="left:456px">English (Canada)</div>
</div>
<div class="row" style="top:308px;">
<div class="cb"></div>
<svg class="a" style="left:7px;top:6px" width="12" height="9" viewBox="0 0 12 9"><path d="M2.1 4.4L5 7.3L10.7 1.3" stroke="#383838" stroke-width="1.1" fill="none"/></svg>
<svg class="a" style="left:28px;top:0" width="22" height="22" viewBox="0 0 22 22"><path d="M16.2 2.8L18.2 2.1L18.8 3.9L9.2 18L7.4 18.2L5.6 13.6L3 11.6V9.8L5.6 9.2L8.3 11.4Z" fill="#28c428"/><path d="M3 11.6V9.8L5.6 9.2L8.3 11.4L7.5 14.2L5.6 13.6Z" fill="#7ad87a"/><path d="M5.6 9.2L8.3 11.4" stroke="#1a4a1a" stroke-width="1.1"/><path d="M18.2 2.1L18.8 3.9L9.2 18L7.4 18.2" stroke="#0a420a" stroke-width="1.3" fill="none"/></svg>
<svg class="a" style="left:180px;top:0" width="20" height="22" viewBox="0 0 20 22"><rect x="1.9" y="1.9" width="14" height="10.1" fill="#0b1a82"/><rect x="3.8" y="3.5" width="10.3" height="7.3" fill="url(#scr)"/><path d="M2 12H16L17 16.5V17.6H1.1V16.5Z" fill="#0b1a82"/><path d="M3 12.8H15L16 16.3H2Z" fill="#2c64cc"/><rect x="1.1" y="16.6" width="15.9" height="1.1" fill="#000a48"/></svg>
<div class="gt" style="left:56px">Default</div>
<div class="gt" style="left:206px">Default resource</div>
<div class="gt" style="left:456px">Arabic (Morocco)</div>
</div>
<div class="row" style="top:330px;">
<div class="cb"></div>
<svg class="a" style="left:7px;top:6px" width="12" height="9" viewBox="0 0 12 9"><path d="M2.1 4.4L5 7.3L10.7 1.3" stroke="#383838" stroke-width="1.1" fill="none"/></svg>
<svg class="a" style="left:28px;top:0" width="22" height="22" viewBox="0 0 22 22"><path d="M16.2 2.8L18.2 2.1L18.8 3.9L9.2 18L7.4 18.2L5.6 13.6L3 11.6V9.8L5.6 9.2L8.3 11.4Z" fill="#28c428"/><path d="M3 11.6V9.8L5.6 9.2L8.3 11.4L7.5 14.2L5.6 13.6Z" fill="#7ad87a"/><path d="M5.6 9.2L8.3 11.4" stroke="#1a4a1a" stroke-width="1.1"/><path d="M18.2 2.1L18.8 3.9L9.2 18L7.4 18.2" stroke="#0a420a" stroke-width="1.3" fill="none"/></svg>
<svg class="a" style="left:180px;top:0" width="20" height="22" viewBox="0 0 20 22"><rect x="1.9" y="1.9" width="14" height="10.1" fill="#0b1a82"/><rect x="3.8" y="3.5" width="10.3" height="7.3" fill="url(#scr)"/><path d="M2 12H16L17 16.5V17.6H1.1V16.5Z" fill="#0b1a82"/><path d="M3 12.8H15L16 16.3H2Z" fill="#2c64cc"/><rect x="1.1" y="16.6" width="15.9" height="1.1" fill="#000a48"/></svg>
<div class="gt" style="left:56px">Default</div>
<div class="gt" style="left:206px">Default resource</div>
<div class="gt" style="left:456px">French (Morocco)</div>
</div>
<div class="vl" style="left:0px"></div>
<div class="vl" style="left:26px"></div>
<div class="vl" style="left:52px"></div>
<div class="vl" style="left:176px"></div>
<div class="vl" style="left:202px"></div>
<div class="vl" style="left:452px"></div>
<div class="vl" style="left:702px"></div>
</div>
<div class="a" style="left:884px;top:199px;width:17px;height:367px;background:#f0f0f0;border:1px solid #fff"></div>
<div class="a" style="left:885px;top:216px;width:15px;height:20px;background:#cdcdcd"></div>
<svg class="a" style="left:888px;top:203.5px" width="9" height="9" viewBox="0 0 9 9"><path d="M1.5 6.6L4.5 2.6L7.5 6.6" stroke="#585858" stroke-width="1.9" fill="none"/></svg>
<svg class="a" style="left:888px;top:553px" width="9" height="9" viewBox="0 0 9 9"><path d="M1.5 2.4L4.5 6.4L7.5 2.4" stroke="#585858" stroke-width="1.9" fill="none"/></svg>
<div class="dot" style="left:185.8px;top:580.8px"></div>
<div class="lk" style="left:195.5px;top:577px;letter-spacing:0.75px">Create new</div>
<div class="dot" style="left:185.8px;top:603.8px;background:#909090"></div>
<div class="lk" style="left:195.5px;top:600px;color:#9a9a9a;letter-spacing:0.75px">Delete</div>
<div class="dot" style="left:185.8px;top:626.8px"></div>
<div class="lk" style="left:195.5px;top:623px">Edit</div>
<div class="lk" style="left:507.5px;top:577px;letter-spacing:1.05px">Import new</div>
<div class="lk" style="left:522px;top:600px;letter-spacing:1.0px">Export</div>
<div class="lk" style="left:856px;top:577px;letter-spacing:0.2px">Clone</div>
<div class="dot" style="left:891.8px;top:580.7px"></div>
<div class="btn" style="left:562px"><u>O</u>K</div>
<div class="btn" style="left:648px;background:#cccccc;border-color:#bfbfbf;color:#9d9d9d"><u>A</u>pply</div>
<div class="btn" style="left:734px">Ca<u>n</u>cel</div>
<div class="btn" style="left:820px;width:88px"><u>H</u>elp</div>
</body></html>
